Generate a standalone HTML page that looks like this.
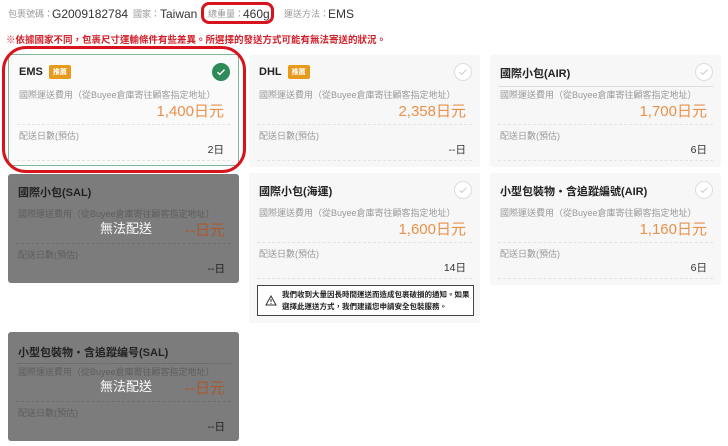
<!DOCTYPE html>
<html><head><meta charset="utf-8"><style>
*{margin:0;padding:0;box-sizing:border-box}
body{width:728px;height:446px;background:#fff;position:relative;overflow:hidden;font-family:"Liberation Sans","Noto Sans CJK TC",sans-serif;color:#333}
.hl{position:absolute;top:7px;font-size:9px;line-height:14px;color:#999;white-space:nowrap}
.hv{position:absolute;top:7px;font-size:12px;line-height:14px;color:#333;white-space:nowrap}
.warn{position:absolute;left:6px;top:32px;font-size:9.5px;color:#d0202a;font-weight:bold;white-space:nowrap}
.card{position:absolute;width:231px;height:112px;background:#f7f7f7;border-radius:3px}
.t{position:absolute;left:10px;top:10px;font-size:11px;font-weight:bold;color:#222;white-space:nowrap}
.b{display:inline-block;background:#e79a1c;color:#fff;font-size:7px;padding:2px 4px;margin-left:6px;border-radius:2px;vertical-align:1px}
.ck{position:absolute;right:8px;top:8px;width:18px;height:18px;border-radius:50%;border:1px solid #ddd;background:#fff}
.ck svg{position:absolute;left:3px;top:3px}
.sl{position:absolute;left:8px;right:8px;top:31px;border-top:1px solid #ddd}
.l1{position:absolute;left:10px;top:33px;font-size:9px;color:#999;white-space:nowrap}
.p{position:absolute;right:14px;top:45px;font-size:15px;color:#e8914a}
.d1{position:absolute;left:8px;right:8px;top:69px;border-top:1px dashed #e3e3e3}
.l2{position:absolute;left:10px;top:74px;font-size:9px;color:#999}
.v{position:absolute;right:14px;top:87px;font-size:10.5px;color:#333}
.d2{position:absolute;left:8px;right:8px;top:105px;border-top:1px dashed #e3e3e3}
.g{background:#7c7c7c}
.g .t{color:#222}
.g .l1,.g .l2{color:#5e5e5e}
.g .p{color:#a85a30}
.g .v{color:#222}
.g .d1,.g .d2{border-color:#6e6e6e}
.na{position:absolute;left:92px;top:44px;font-size:13px;color:#fff}
</style></head><body>
<div class="hl" style="left:8px">包裹號碼：</div><div class="hv" style="left:52px">G2009182784</div>
<div class="hl" style="left:133px">國家：</div><div class="hv" style="left:160px">Taiwan</div>
<div class="hl" style="left:208px">總重量：</div><div class="hv" style="left:243px">460g</div>
<div class="hl" style="left:284px">運送方法：</div><div class="hv" style="left:328px">EMS</div>
<div style="position:absolute;left:201px;top:2px;width:73px;height:22px;border:3px solid #d7141e;border-radius:8px"></div>
<div class="warn">※依據國家不同，包裹尺寸運輸條件有些差異。所選擇的發送方式可能有無法寄送的狀況。</div>

<div class="card" style="left:8px;top:54px;border:1px solid #7fb89a;background:#fafafa">
<div class="t">EMS<span class="b">推薦</span></div>
<div class="ck" style="background:#2e8b57;border-color:#2e8b57"><svg width="10" height="10" viewBox="0 0 10 10"><path d="M1.5 5.2l2.3 2.2 4.7-4.8" fill="none" stroke="#fff" stroke-width="1.4"/></svg></div>
<div class="l1">國際運送費用（從Buyee倉庫寄往顧客指定地址）</div>
<div class="p">1,400日元</div><div class="d1"></div>
<div class="l2">配送日數(預估)</div><div class="v">2日</div><div class="d2"></div>
</div>
<div style="position:absolute;left:2px;top:46px;width:244px;height:127px;border:3px solid #d7141e;border-radius:24px"></div>

<div class="card" style="left:249px;top:55px">
<div class="t">DHL<span class="b">推薦</span></div>
<div class="ck"><svg width="10" height="10" viewBox="0 0 10 10"><path d="M1.5 5.2l2.3 2.2 4.7-4.8" fill="none" stroke="#ccc" stroke-width="1"/></svg></div>
<div class="l1">國際運送費用（從Buyee倉庫寄往顧客指定地址）</div>
<div class="p">2,358日元</div><div class="d1"></div>
<div class="l2">配送日數(預估)</div><div class="v">--日</div><div class="d2"></div>
</div>

<div class="card" style="left:490px;top:55px">
<div class="t">國際小包(AIR)</div>
<div class="ck"><svg width="10" height="10" viewBox="0 0 10 10"><path d="M1.5 5.2l2.3 2.2 4.7-4.8" fill="none" stroke="#ccc" stroke-width="1"/></svg></div>
<div class="sl"></div>
<div class="l1">國際運送費用（從Buyee倉庫寄往顧客指定地址）</div>
<div class="p">1,700日元</div><div class="d1"></div>
<div class="l2">配送日數(預估)</div><div class="v">6日</div><div class="d2"></div>
</div>

<div class="card g" style="left:8px;top:174px;height:109px">
<div class="t">國際小包(SAL)</div>
<div class="l1">國際運送費用（從Buyee倉庫寄往顧客指定地址）</div>
<div class="na">無法配送</div>
<div class="p">--日元</div><div class="d1"></div>
<div class="l2">配送日數(預估)</div><div class="v">--日</div>
</div>

<div class="card" style="left:249px;top:173px;height:150px">
<div class="t">國際小包(海運)</div>
<div class="ck"><svg width="10" height="10" viewBox="0 0 10 10"><path d="M1.5 5.2l2.3 2.2 4.7-4.8" fill="none" stroke="#ccc" stroke-width="1"/></svg></div>
<div class="l1">國際運送費用（從Buyee倉庫寄往顧客指定地址）</div>
<div class="p">1,600日元</div><div class="d1"></div>
<div class="l2">配送日數(預估)</div><div class="v">14日</div><div class="d2"></div>
<div style="position:absolute;left:8px;top:112px;width:217px;height:31px;border:1px solid #444;background:#fff">
<svg style="position:absolute;left:7px;top:9px" width="12" height="11" viewBox="0 0 12 11"><path d="M6 1L11 10H1Z" fill="none" stroke="#333" stroke-width="1"/><path d="M6 4v3M6 8v1" stroke="#333" stroke-width="1"/></svg>
<div style="position:absolute;left:24px;top:3px;font-size:7.5px;line-height:12px;color:#222;font-weight:bold">我們收到大量因長時間運送而造成包裹破損的通知。如果<br>選擇此運送方式，我們建議您申請安全包裝服務。</div>
</div>
</div>

<div class="card" style="left:490px;top:173px">
<div class="t">小型包裝物・含追蹤編號(AIR)</div>
<div class="ck"><svg width="10" height="10" viewBox="0 0 10 10"><path d="M1.5 5.2l2.3 2.2 4.7-4.8" fill="none" stroke="#ccc" stroke-width="1"/></svg></div>
<div class="l1">國際運送費用（從Buyee倉庫寄往顧客指定地址）</div>
<div class="p">1,160日元</div><div class="d1"></div>
<div class="l2">配送日數(預估)</div><div class="v">6日</div><div class="d2"></div>
</div>

<div class="card g" style="left:8px;top:332px;height:109px">
<div class="t" style="top:12px">小型包裝物・含追蹤编号(SAL)</div>
<div class="sl" style="border-color:#6e6e6e"></div>
<div class="l1">國際運送費用（從Buyee倉庫寄往顧客指定地址）</div>
<div class="na">無法配送</div>
<div class="p">--日元</div><div class="d1"></div>
<div class="l2">配送日數(預估)</div><div class="v">--日</div>
</div>
</body></html>
